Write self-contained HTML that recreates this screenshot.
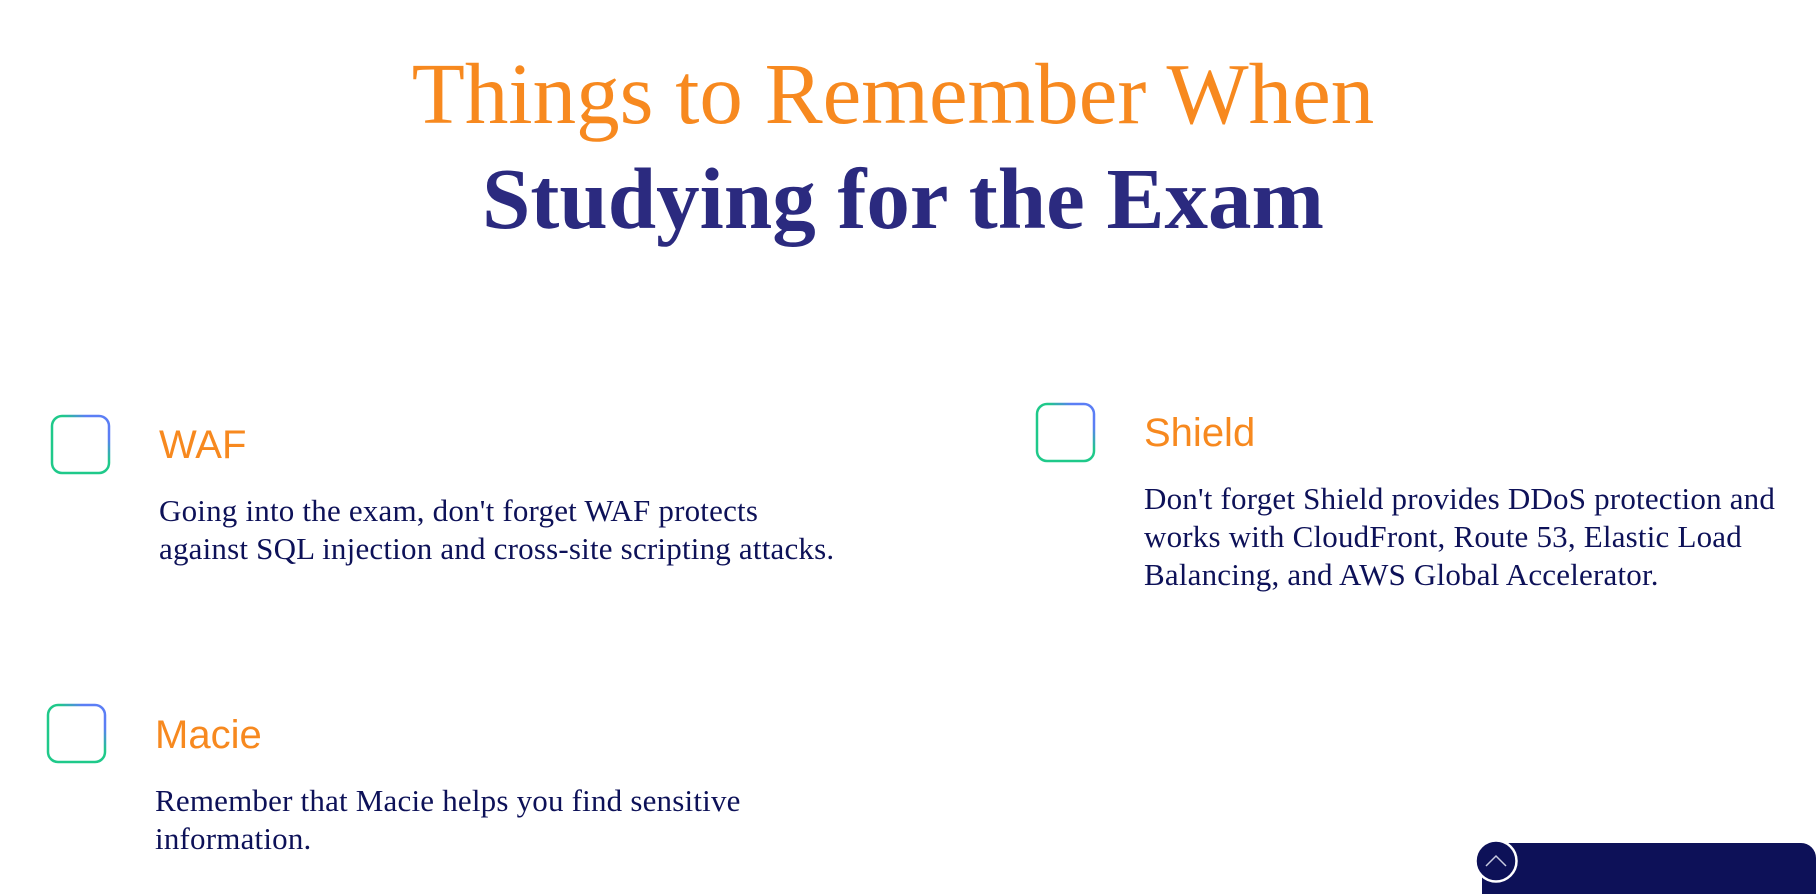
<!DOCTYPE html>
<html><head><meta charset="utf-8"><style>
html,body{margin:0;padding:0;background:#fff;width:1816px;height:894px;overflow:hidden;position:relative}
.h{position:absolute;left:0;width:1806px;text-align:center;font-family:"Liberation Serif",serif;font-size:87px;line-height:87px;white-space:nowrap}
.t{position:absolute;font-family:"Liberation Sans",sans-serif;font-size:40px;line-height:40px;color:#f7891f}
.p{position:absolute;font-family:"Liberation Serif",serif;font-size:31px;letter-spacing:0.2px;line-height:38px;color:#0d1158;white-space:nowrap}
svg.b{position:absolute}
</style></head><body>
<div class="h" style="top:50px;left:-10px;color:#f7891f">Things to Remember When</div>
<div class="h" style="top:155px;color:#2b2a7f;font-weight:bold">Studying for the Exam</div>

<svg class="b" style="left:50px;top:414px" width="62" height="62"><defs><linearGradient id="g" x1="0" y1="1" x2="1" y2="0"><stop offset="0.6" stop-color="#1fc98a"/><stop offset="0.8" stop-color="#5b7ef5"/></linearGradient></defs><rect x="2" y="2" width="57" height="57" rx="10" fill="none" stroke="url(#g)" stroke-width="2.5"/></svg>
<div class="t" style="left:159px;top:425px">WAF</div>
<div class="p" style="left:159px;top:492px">Going into the exam, don't forget WAF protects<br>against SQL injection and cross-site scripting attacks.</div>

<svg class="b" style="left:1035px;top:402px" width="62" height="62"><rect x="2" y="2" width="57" height="57" rx="10" fill="none" stroke="url(#g)" stroke-width="2.5"/></svg>
<div class="t" style="left:1144px;top:413px">Shield</div>
<div class="p" style="left:1144px;top:480px">Don't forget Shield provides DDoS protection and<br>works with CloudFront, Route 53, Elastic Load<br>Balancing, and AWS Global Accelerator.</div>

<svg class="b" style="left:46px;top:703px" width="62" height="62"><rect x="2" y="2" width="57" height="57" rx="10" fill="none" stroke="url(#g)" stroke-width="2.5"/></svg>
<div class="t" style="left:155px;top:715px">Macie</div>
<div class="p" style="left:155px;top:782px">Remember that Macie helps you find sensitive<br>information.</div>

<div style="position:absolute;left:1482px;top:843px;width:334px;height:70px;background:#0d1158;border-radius:15px"></div>
<svg style="position:absolute;left:1473px;top:838px" width="46" height="46"><circle cx="23" cy="23" r="20.5" fill="#0d1158" stroke="#fff" stroke-width="2.5"/><path d="M13 28 L23 18 L33 28" fill="none" stroke="#c8cbe0" stroke-width="1.5"/></svg>
</body></html>
